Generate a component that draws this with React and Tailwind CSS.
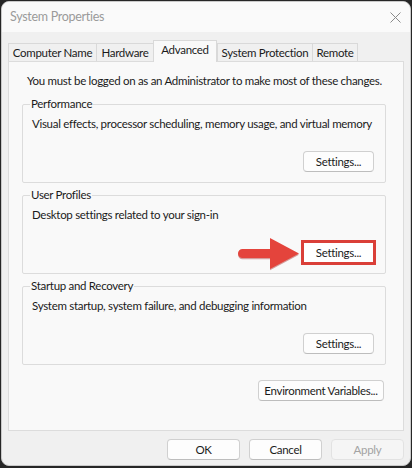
import React from "react";

const tabs = [
  { name: "Computer Name", w: "w-[88px]" },
  { name: "Hardware", w: "w-[57px]" },
  { name: "Advanced", w: "w-[64px]", active: true },
  { name: "System Protection", w: "w-[95px]" },
  { name: "Remote", w: "w-[46px]" },
];

const groups = [
  {
    title: "Performance",
    text: "Visual effects, processor scheduling, memory usage, and virtual memory",
  },
  {
    title: "User Profiles",
    text: "Desktop settings related to your sign-in",
    highlight: true,
  },
  {
    title: "Startup and Recovery",
    text: "System startup, system failure, and debugging information",
  },
];

const Button = ({ children, className = "", disabled = false }) => (
  <button
    className={`h-[21px] rounded-[4px] border leading-none ${
      disabled
        ? "bg-[#f5f5f5] border-[#e2e2e2] text-[#a3a3a3]"
        : "bg-[#fdfdfd] border-[#d0d0d0] border-b-[#bdbdbd] text-[#1b1b1b]"
    } ${className}`}
  >
    {children}
  </button>
);

// red call-out arrow pointing at the highlighted button
const Arrow = () => (
  <svg width="64" height="33" viewBox="0 0 64 33" className="absolute right-[72px] top-[-4px]">
    <path d="M4.5 11 H32 V0 L61 15.5 L32 31 V20 H4.5 A4.5 4.5 0 0 1 4.5 11 Z" fill="#a82d28" transform="translate(0 1.2)" opacity="0.45" />
    <path d="M4.5 11 H32 V0 L61 15.5 L32 31 V20 H4.5 A4.5 4.5 0 0 1 4.5 11 Z" fill="#e4443c" />
  </svg>
);

const Group = ({ title, text, highlight }) => (
  <fieldset className="border border-[#dcdcdc] rounded-[2px] pl-[7px] pr-[11px] pb-[10px]">
    <legend className="px-px leading-[16px]">{title}</legend>
    <p className="mt-[4px] pl-[2px] leading-[16px]">{text}</p>
    <div className="mt-[19px] flex justify-end">
      {highlight ? (
        <div className="relative">
          <Arrow />
          <Button className="w-[71px] h-[20px] rounded-none border-[#da3f38] bg-white outline-[3px] outline-solid outline-offset-[-1px] outline-[#da3f38]">
            Settings...
          </Button>
        </div>
      ) : (
        <Button className="w-[71px] h-[20px]">Settings...</Button>
      )}
    </div>
  </fieldset>
);

export default function App() {
  return (
    <div className="w-[412px] h-[468px] bg-[#262626] pt-px pl-px font-['Lato',sans-serif] text-[11.5px] tracking-[-0.3px] text-[#1b1b1b]">
      <div className="w-[410px] h-[465px] rounded-[8px] overflow-hidden bg-[#f0f0f0] flex flex-col border border-[#c9c9c9]">
        {/* Title bar */}
        <div className="h-[30px] bg-[#fafafa] flex items-center justify-between pl-[8px] pr-[9px]">
          <span className="text-[12.5px] text-[#9a9a9a]">System Properties</span>
          <svg width="11" height="11" viewBox="0 0 11 11" className="stroke-[#8a8a8a]">
            <path d="M0.5 0.5 L10.5 10.5 M10.5 0.5 L0.5 10.5" strokeWidth="1" />
          </svg>
        </div>

        <div className="flex-1 px-[6px] pt-[8px] flex flex-col">
          {/* Tabs */}
          <div className="flex items-end h-[21px]">
            {tabs.map((t) =>
              t.active ? (
                <div
                  key={t.name}
                  className={`${t.w} h-[22px] -mb-px relative z-10 bg-[#f9f9f9] border border-b-0 border-[#d9d9d9] flex items-center justify-center pb-[3px]`}
                >
                  {t.name}
                </div>
              ) : (
                <div
                  key={t.name}
                  className={`${t.w} h-[18px] bg-[#f0f0f0] border-t border-l last:border-r border-[#d9d9d9] flex items-center justify-center`}
                >
                  {t.name}
                </div>
              )
            )}
          </div>

          {/* Tab panel */}
          <div className="h-[370px] bg-[#f9f9f9] border border-[#dcdcdc] pt-[11px] pb-[27px] flex flex-col">
            <p className="pl-[18px] leading-[16px]">
              You must be logged on as an Administrator to make most of these changes.
            </p>
            <div className="ml-[13px] mr-[17px] mt-[7px] flex flex-col gap-[4px]">
              {groups.map((g) => (
                <Group key={g.title} {...g} />
              ))}
            </div>
            <div className="mt-[15px] mr-[19px] flex justify-end">
              <Button className="w-[126px] h-[20px]">Environment Variables...</Button>
            </div>
          </div>

          {/* Dialog buttons */}
          <div className="mt-[8px] flex justify-end gap-[9px]">
            <Button className="w-[73px]">OK</Button>
            <Button className="w-[73px]">Cancel</Button>
            <Button className="w-[73px]" disabled>
              Apply
            </Button>
          </div>
        </div>
      </div>
    </div>
  );
}
